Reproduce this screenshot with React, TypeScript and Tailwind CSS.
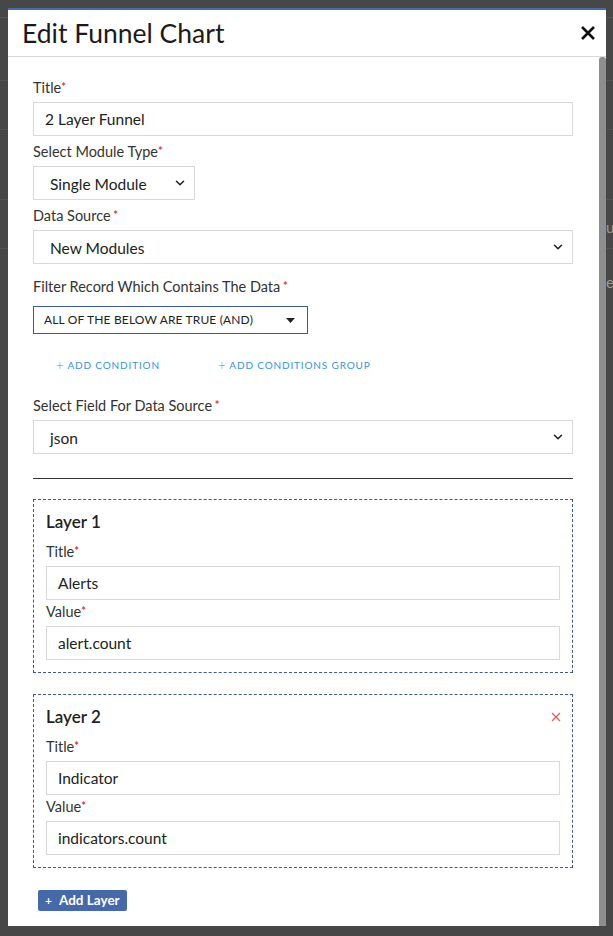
import { ChevronDown } from 'lucide-react';

const Req = ({ space }: { space?: boolean }) => (
  <span className="text-[#e0353b] text-[11px] font-bold align-top relative top-[-1px]">
    {space ? ' *' : '*'}
  </span>
);

const Label = ({ text, space }: { text: string; space?: boolean }) => (
  <label className="block text-[14.5px] leading-[18px] text-[#333] mb-[5px]">
    {text}
    <Req space={space} />
  </label>
);

const TextBox = ({ value }: { value: string }) => (
  <div className="h-[34px] border border-[#d9d9d9] bg-white flex items-center pl-[11px] pt-[2px] text-[15.5px] text-[#222]">
    {value}
  </div>
);

const SelectBox = ({ value, className }: { value: string; className?: string }) => (
  <div
    className={`h-[34px] border border-[#d9d9d9] bg-white flex items-center justify-between pl-[16px] pr-[7px] text-[15.5px] text-[#222] ${className ?? ''}`}
  >
    <span className="pt-[3px]">{value}</span>
    <ChevronDown size={14} strokeWidth={2.6} className="text-[#222]" />
  </div>
);

type Layer = { name: string; title: string; value: string; removable?: boolean };

const layers: Layer[] = [
  { name: 'Layer 1', title: 'Alerts', value: 'alert.count' },
  { name: 'Layer 2', title: 'Indicator', value: 'indicators.count', removable: true },
];

const LayerCard = ({ layer }: { layer: Layer }) => (
  <div className="border border-dashed border-[#3c5b91] px-[12px] pt-[11px] pb-[12px]">
    <div className="flex items-center justify-between h-[22px] mb-[10px]">
      <h3 className="text-[17px] font-semibold text-[#222]">{layer.name}</h3>
      {layer.removable && (
        <svg width="10" height="10" viewBox="0 0 10 10" className="mr-[-1px]">
          <path d="M1 1L9 9M9 1L1 9" stroke="#e65a5a" strokeWidth="1.3" />
        </svg>
      )}
    </div>
    <Label text="Title" />
    <TextBox value={layer.title} />
    <div className="mt-[3px]">
      <Label text="Value" />
      <TextBox value={layer.value} />
    </div>
  </div>
);

export default function App() {
  return (
    <div className="relative w-[613px] h-[936px] bg-[#474747] overflow-hidden font-[Lato,'Liberation_Sans',sans-serif] pt-[8px] pl-[8px]">
      {/* page behind the overlay */}
      <div className="absolute left-0 right-0 top-[17px] h-px bg-[#525252]" />
      <div className="absolute left-0 right-0 top-[80px] h-px bg-[#525252]" />
      <div className="absolute left-0 right-0 top-[129px] h-px bg-[#4f4f4f]" />
      <div className="absolute left-0 right-0 top-[199px] h-px bg-[#525252]" />
      <div className="absolute left-0 right-0 top-[248px] h-px bg-[#525252]" />
      <span className="absolute left-[606px] top-[216px] text-[15px] text-[#9a9a9a]">u</span>
      <span className="absolute left-[606px] top-[271px] text-[15px] text-[#9a9a9a]">e</span>

      <div className="relative w-[598px] h-[918px] bg-white flex flex-col border-t-2 border-[#4a6aa8]">
        <div className="h-[47px] flex items-center justify-between pl-[14px] pr-[10px] border-b border-[#d9d9d9] shrink-0">
          <h2 className="text-[26.5px] text-[#1a1a1a] leading-none mt-[1px]">Edit Funnel Chart</h2>
          <svg width="16" height="16" viewBox="0 0 16 16">
            <path d="M2 2L14 14M14 2L2 14" stroke="#111" strokeWidth="2.6" />
          </svg>
        </div>

        <div className="flex flex-1 min-h-0">
          <div className="flex-1 pl-[25px] pr-[26px] pt-[22px]">
            <Label text="Title" />
            <TextBox value="2 Layer Funnel" />

            <div className="mt-[7px]">
              <Label text="Select Module Type" />
              <SelectBox value="Single Module" className="w-[162px]" />
            </div>

            <div className="mt-[7px]">
              <Label text="Data Source" space />
              <SelectBox value="New Modules" />
            </div>

            <div className="mt-[14px]">
              <label className="block text-[14.5px] leading-[18px] text-[#333] mb-[10px]">
                Filter Record Which Contains The Data
                <Req space />
              </label>
              <div className="w-[275px] h-[28px] border border-[#3c5b91] flex items-center justify-between pl-[10px] pr-[12px] text-[12px] text-[#222] tracking-[0.15px]">
                <span>ALL OF THE BELOW ARE TRUE (AND)</span>
                <svg width="9" height="5" viewBox="0 0 9 5">
                  <path d="M0 0H9L4.5 5Z" fill="#222" />
                </svg>
              </div>
            </div>

            <div className="flex items-center h-[16px] mt-[23px] ml-[23px] gap-[58px] text-[10px] tracking-[0.85px] text-[#3a93dc]">
              <span>
                <span className="text-[13px] font-light mr-[3px] relative top-[0.5px]">+</span>ADD CONDITION
              </span>
              <span>
                <span className="text-[13px] font-light mr-[3px] relative top-[0.5px]">+</span>ADD CONDITIONS GROUP
              </span>
            </div>

            <div className="mt-[24px]">
              <Label text="Select Field For Data Source" space />
              <SelectBox value="json" />
            </div>

            <div className="h-px bg-[#333] mt-[24px]" />

            <div className="mt-[20px] flex flex-col gap-[21px]">
              {layers.map((l) => (
                <LayerCard key={l.name} layer={l} />
              ))}
            </div>

            <button className="mt-[22px] ml-[5px] h-[21px] px-[7px] bg-[#4769a8] text-white text-[13.5px] font-bold rounded-[2px] flex items-center">
              <span className="mr-[7px] text-[12px]">+</span>Add Layer
            </button>
          </div>
          <div className="w-[7px] bg-[#8e8e8e] rounded-t-[3px]" />
        </div>
      </div>
    </div>
  );
}
